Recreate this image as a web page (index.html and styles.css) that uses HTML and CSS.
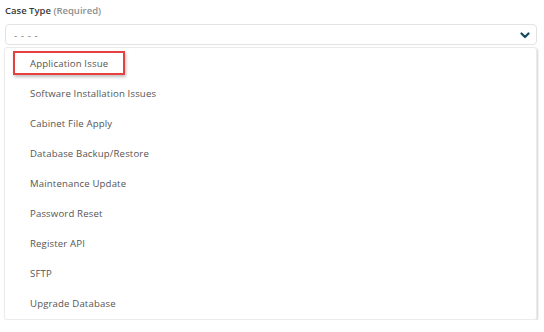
FILE: index.html
```html
<!DOCTYPE html>
<html>
<head>
<meta charset="utf-8">
<link rel="stylesheet" href="styles.css">
</head>
<body>
<div class="field">
  <div class="label">Case Type <span class="req">(Required)</span></div>
  <div class="select">
    <span class="placeholder">- - - -</span>
    <svg class="chev" width="10" height="7" viewBox="0 0 10 7"><polyline points="1.5,1.5 5,5 8.5,1.5" fill="none" stroke="#184a5f" stroke-width="2.2" stroke-linecap="round" stroke-linejoin="round"/></svg>
  </div>
  <ul class="menu">
    <li class="item"><span class="opt hl">Application Issue</span></li>
    <li class="item"><span class="opt">Software Installation Issues</span></li>
    <li class="item"><span class="opt">Cabinet File Apply</span></li>
    <li class="item"><span class="opt">Database Backup/Restore</span></li>
    <li class="item"><span class="opt">Maintenance Update</span></li>
    <li class="item"><span class="opt">Password Reset</span></li>
    <li class="item"><span class="opt">Register API</span></li>
    <li class="item"><span class="opt">SFTP</span></li>
    <li class="item"><span class="opt">Upgrade Database</span></li>
  </ul>
</div>
</body>
</html>
```
FILE: styles.css
```css
html, body { margin: 0; padding: 0; background: #fff; }
body { font-family: "Open Sans", "Liberation Sans", sans-serif; color: #555; }
.field { padding: 4px 7px 0 5px; }
.label { font-size: 9.5px; font-weight: 600; color: #3a3a3a; height: 15px; line-height: 14px; margin-bottom: 5px; white-space: nowrap; }
.req { color: #8e8e8e; }
.select {
  height: 21px; box-sizing: border-box; border: 1px solid #e3e3e3; border-radius: 4px;
  display: flex; align-items: center; justify-content: space-between; padding: 0 6px 0 8px;
}
.placeholder { font-size: 10px; color: #8a8a8a; letter-spacing: 0.5px; }
.chev { display: block; margin-top: 1px; }
.menu {
  list-style: none; margin: 2px 0 0 -1px; padding: 0 0 2px 0; width: 533px;
  border: 1px solid #ebebeb; border-radius: 3px; box-shadow: 1px 1px 2px rgba(0,0,0,0.18);
  height: 273px; box-sizing: border-box;
}
.item { height: 30px; display: flex; align-items: center; padding-left: 8px; }
.opt {
  font-size: 9.6px; color: #555; border: 2px solid transparent; height: 24px; box-sizing: border-box;
  display: inline-flex; align-items: center; padding: 0 15px; white-space: nowrap; letter-spacing: 0.15px;
}
.opt.hl { border-color: #e64040; width: 112px; box-shadow: 1px 2px 3px rgba(0,0,0,0.25); }
```
